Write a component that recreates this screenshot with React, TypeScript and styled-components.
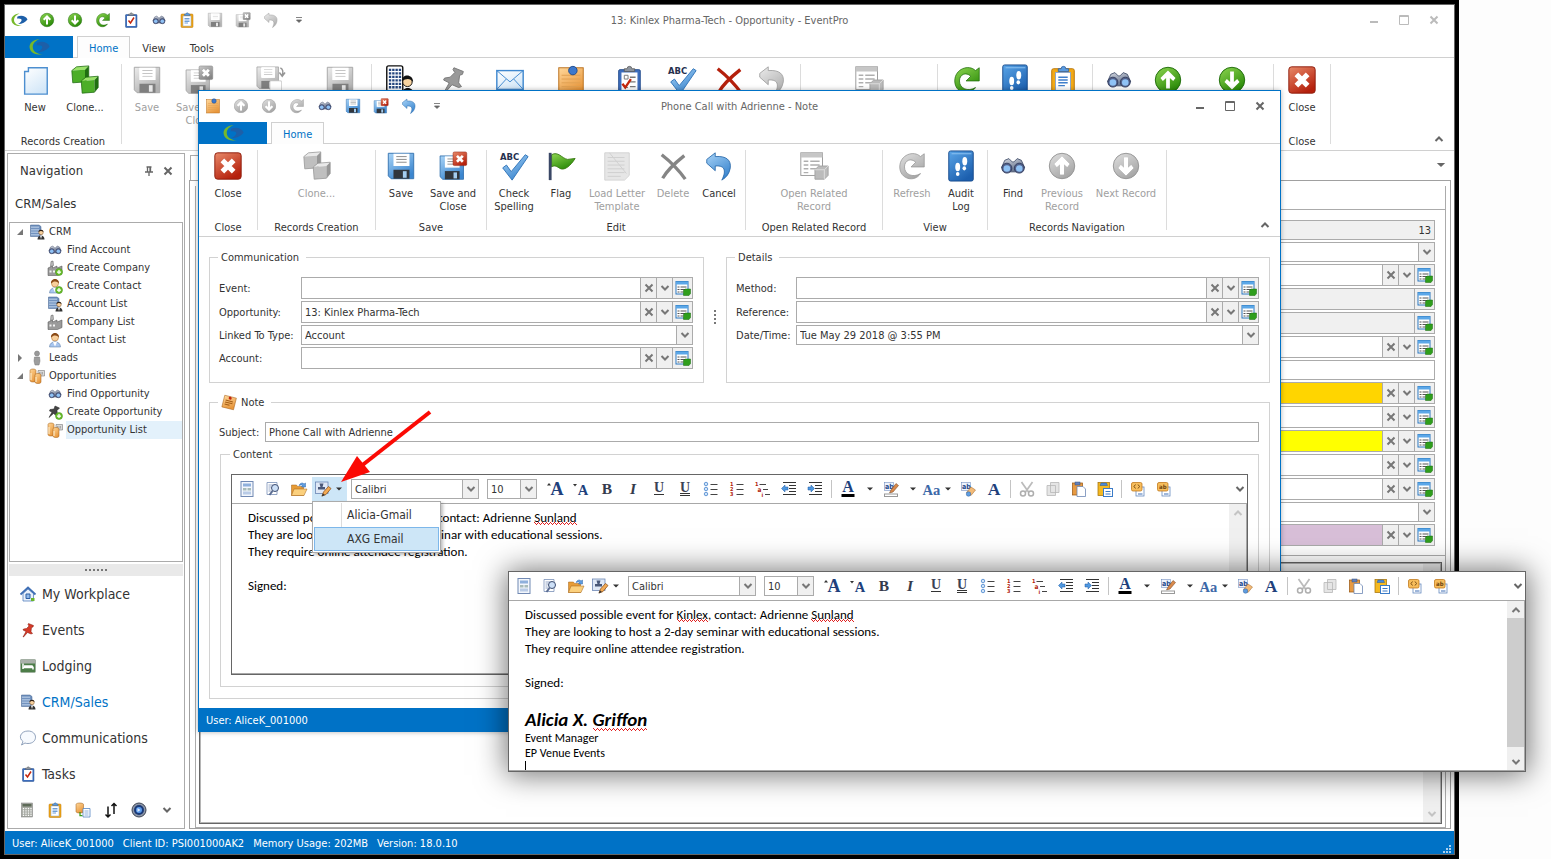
import React from "react";
import styled, { createGlobalStyle, css } from "styled-components";

const UI = `"DejaVu Sans Condensed", "Noto Sans", sans-serif`;
const DOC = `Carlito, Lato, "Open Sans", sans-serif`;
const BLUE = "#0072c6";

const Global = createGlobalStyle`
  * { box-sizing: border-box; }
  body { margin: 0; background: #fdfdfd; font: 11px/13px ${UI}; color: #333; }
  button, input, select { font: inherit; color: inherit; margin: 0; padding: 0; border: 0; background: none; border-radius: 0; }
  button { display: flex; align-items: center; justify-content: center; }
  fieldset { margin: 0; min-width: 0; }
`;

/* ---------- icons ---------- */

const Svg = styled.svg<{ $gray?: boolean }>`
  display: block;
  flex: none;
  overflow: visible;
  ${(p) => p.$gray && css`filter: grayscale(1) brightness(1.1); opacity: 0.65;`}
`;

const Gradients = () => (
  <svg width="0" height="0" style={{ position: "absolute" }} aria-hidden="true">
    <defs>
      {[
        ["gGreen", "#8ed651", "#2a8a08"],
        ["gBlue", "#a9d4f7", "#3b86cf"],
        ["gRed", "#e88a6a", "#b5200c"],
        ["gOrange", "#ffd79a", "#e8973c"],
        ["gPage", "#ffffff", "#d3e7f8"],
        ["gSilver", "#d8dce4", "#5d6a86"],
        ["gBook", "#5aa5e8", "#1c5fae"],
      ].map(([id, a, b]) => (
        <linearGradient key={id} id={id} x1="0" y1="0" x2="0.6" y2="1">
          <stop offset="0" stopColor={a} />
          <stop offset="1" stopColor={b} />
        </linearGradient>
      ))}
    </defs>
  </svg>
);

const cube = (x: number, y: number) => (
  <g key={x} transform={`translate(${x} ${y})`}>
    <path d="M0 5l5-4 13-1-4 4z" fill="#9be26a" />
    <path d="M0 5l14-1v13L1 18z" fill="#4cae28" />
    <path d="M14 4l4-4v12l-4 5z" fill="#1f6f10" />
    <path d="M0 5l5-4 13-1v12l-4 5-13 1z" fill="none" stroke="#1d6a10" strokeWidth="0.8" />
  </g>
);

const disk = (
  <>
    <path d="M2.500 2.500h27v27h-24l-3-3z" fill="url(#gBlue)" stroke="#3573b0" />
    <rect x="8" y="3" width="17" height="13" fill="#fff" />
    <path d="M11 6h11M11 9h11M11 12h11" stroke="#888" />
    <rect x="8" y="20" width="17" height="9.500" fill="#31363d" />
    <rect x="18" y="21.500" width="4" height="7" fill="#a4cdf0" />
  </>
);

const redBox = (
  <>
    <rect x="2" y="2" width="28" height="28" rx="3" fill="url(#gRed)" stroke="#8d1c0c" />
    <path d="M10 10l12 12M22 10L10 22" stroke="#fff" strokeWidth="5.500" />
  </>
);

const board = (
  <>
    <rect x="5" y="5" width="23" height="26" rx="1.500" fill="#3d6dbd" stroke="#27508f" />
    <rect x="8" y="8" width="17" height="20" fill="#fff" />
    <path d="M11 7V4h3a2.500 2.500 0 0 1 5 0h3v3z" fill="#8d949e" stroke="#555" strokeWidth="0.8" />
  </>
);

const goldBoard = (
  <>
    <rect x="4" y="4" width="24" height="27" rx="2" fill="#f2a917" stroke="#b87408" />
    <rect x="8" y="8" width="16" height="20" fill="#fff" stroke="#8aa5cc" />
    <path d="M11 13h10M11 16h10M11 19h10M11 22h7" stroke="#3f7fcb" strokeWidth="1.500" />
    <path d="M11 7V4h3a2.500 2.500 0 0 1 5 0h3v3z" fill="#5a9be0" stroke="#2b5c9d" strokeWidth="0.800" />
  </>
);

const building = (
  <>
    <path d="M3 2h17l4 3v20H3z" fill="#7192bf" stroke="#3f5f8d" />
    <path d="M6 5v19M10 5v19M14 5v19M18 5v19" stroke="#dbe8f8" strokeWidth="2" strokeDasharray="3 2" />
    <circle cx="24" cy="17" r="4.500" fill="#f6cf9d" stroke="#7b4c1d" />
    <path d="M19 16c0-6 10-6 10 0-3-2-6-3-10 0z" fill="#2a1c12" />
    <path d="M17 31c0-11 14-11 14 0z" fill="#333" />
    <path d="M22 23h4l-2 7z" fill="#fff" />
  </>
);

const person = (
  <>
    <path d="M5 30c0-14 22-14 22 0z" fill="#a9c6ee" stroke="#54749f" />
    <path d="M12 20h8l-4 9z" fill="#fff" />
    <circle cx="16" cy="11" r="7" fill="#f8cf9b" stroke="#a5641e" />
    <path d="M8 11C7-1 25-1 24 11c-3-5-11-6-16 0z" fill="#8a4a16" />
  </>
);

const plus = (
  <>
    <circle cx="24" cy="24" r="7" fill="#6cc02e" stroke="#3f8a12" />
    <path d="M24 20v8M20 24h8" stroke="#fff" strokeWidth="2.500" />
  </>
);

const factory = (
  <>
    <path d="M2 16l9-4v4l9-4v4l10-4v15l-9 4H2z" fill="#9b9b9b" stroke="#4b4b4b" />
    <path d="M7 13l1-10 4-1 1 9z" fill="#bdbdbd" stroke="#555" />
    <path d="M5 21h4v4H5zM12 21h4v4h-4z" fill="#f4f4f4" />
  </>
);

const coins = (
  <>
    <path d="M18 5h13v11H18z" fill="#d9d9d9" stroke="#666" />
    <path d="M21 8v5M24 8v5M27 8v5" stroke="#777" />
    <path d="M2 5c0-4 12-4 12 0v20c0 4-12 4-12 0z" fill="url(#gOrange)" stroke="#9c5a14" />
    <path d="M12 14c0-4 12-4 12 0v14c0 4-12 4-12 0z" fill="url(#gOrange)" stroke="#9c5a14" />
    <path d="M4 10v14M14 18v10" stroke="#fff3d6" strokeWidth="2" />
  </>
);

const ab = (
  <>
    <rect x="3" y="3" width="18" height="16" fill="#eef4fd" stroke="#5f7fb5" />
    <text x="4" y="16" fontSize="14" fontWeight="bold" fontFamily="DejaVu Sans Condensed" fill="#244a8c">ab</text>
  </>
);

const pageStack = (
  <>
    <rect x="12" y="12" width="16" height="18" fill="#fff" stroke="#5b82bb" strokeWidth="1.500" />
    <path d="M16 26h9" stroke="#3f6fb5" strokeWidth="2" />
    <rect x="3" y="3" width="21" height="17" rx="3" fill="#f7bd5b" stroke="#bd7416" strokeWidth="1.500" />
  </>
);

const serif = (t: string, size: number, x = 16, fill = "#20407c", extra: object = {}) => (
  <text x={x} y="26" fontSize={size} textAnchor="middle" fontFamily="Liberation Serif" fontWeight="bold" fill={fill} {...extra}>{t}</text>
);

const lines = "M15 7h14M15 17h14M15 27h14";

const art: Record<string, React.ReactNode> = {
  logo: (
    <>
      <path d="M17 3C6 4 0 10 1 17c1 8 10 12 21 11C13 27 6 23 6 16 6 10 10 6 17 3z" fill="#76b82a" />
      <path d="M13 9c8-3 17-1 20 6-4 5-10 9-19 9 5-3 8-6 7-9-1-2-4-2-9-2z" fill="#1d5fa8" />
    </>
  ),
  up: (
    <>
      <circle cx="16" cy="16" r="13.500" fill="url(#gGreen)" stroke="#1e6b0a" />
      <path d="M16 6l8 8-2.500 3-3.500-3v11h-4V14l-3.500 3L8 14z" fill="#fff" />
    </>
  ),
  down: (
    <>
      <circle cx="16" cy="16" r="13.500" fill="url(#gGreen)" stroke="#1e6b0a" />
      <path d="M16 26l8-8-2.500-3-3.500 3V7h-4v11l-3.500-3L8 18z" fill="#fff" />
    </>
  ),
  refresh: (
    <path d="M25 24C19 34 3 30 3 17 3 4 18-1 25 6l4-3v14H15l5-5c-5-5-12-2-12 5 0 8 9 12 17 7z" fill="url(#gGreen)" stroke="#1e6b0a" strokeWidth="0.800" />
  ),
  task: (
    <>
      {board}
      <path d="M11 17l4 5 7-11" fill="none" stroke="#c4260c" strokeWidth="3" />
    </>
  ),
  taskList: (
    <>
      {board}
      <path d="M11 11h4v4h-4zM11 24h4" fill="none" stroke="#777" />
      <path d="M17 13h6M17 18h6M17 23h6" stroke="#777" strokeWidth="1.500" />
      <path d="M9 20l3 4 6-9" fill="none" stroke="#c4260c" strokeWidth="2.500" />
    </>
  ),
  find: (
    <g transform="translate(2 2) scale(.88)">
      <path d="M6 9l5-2 4 4h2l4-4 5 2 4 9-9 5h-9l-10-5z" fill="url(#gSilver)" stroke="#3b4864" />
      <circle cx="8.500" cy="18.500" r="6" fill="#53618a" stroke="#2d3859" />
      <circle cx="23.500" cy="18.500" r="6" fill="#53618a" stroke="#2d3859" />
      <circle cx="8.500" cy="19" r="4" fill="#8fc2f5" />
      <circle cx="23.500" cy="19" r="4" fill="#8fc2f5" />
    </g>
  ),
  clip: goldBoard,
  save: disk,
  saveClose: (
    <>
      <g transform="translate(0 3) scale(.92)">{disk}</g>
      <g transform="translate(15 0) scale(.52)">{redBox}</g>
    </>
  ),
  saveNew: (
    <>
      <g transform="scale(.85)">{disk}</g>
      <path d="M27 3q4 2 2 8m-3-3l3 4 3-4" fill="none" stroke="#555" strokeWidth="1.500" />
      <path d="M16 17h12v14H16z" fill="#fff" stroke="#999" />
    </>
  ),
  undo: (
    <path d="M3 9l9-7v4c12-1 17 4 16 12-1 6-4 10-9 13 4-8 5-16-7-15v5L3 13z" fill="url(#gBlue)" stroke="#2767a8" strokeWidth="0.900" />
  ),
  page: <path d="M9 3h20v28H5V7h4z" fill="url(#gPage)" stroke="#4d8fd0" strokeWidth="1.500" />,
  cubes: <>{cube(2, 1)}{cube(12, 12)}</>,
  building,
  bigBuilding: (
    <>
      <rect x="3" y="1" width="17" height="27" rx="2" fill="#fff" stroke="#111" strokeWidth="1.500" />
      <path d="M6.500 4v21M10 4v21M13.500 4v21M17 4v21" stroke="#24457e" strokeWidth="2.500" strokeDasharray="2.500 1.200" />
      <circle cx="25" cy="18" r="5" fill="#f7d3a0" stroke="#111" />
      <path d="M19 17c0-8 12-8 12 1-3-4-7-4-12-1z" fill="#111" />
      <path d="M18 32c1-10 14-10 14 0z" fill="#111" />
    </>
  ),
  pin: <path d="M17 3l10 4-1 3-3 1-1 8 3 4-3 1-7-3-8 9-1 0 6-11-6-3 1-2 6-1 5-5-2-3z" fill="#d63a28" stroke="#7e1509" />,
  mail: (
    <>
      <rect x="2" y="6" width="28" height="20" fill="url(#gPage)" stroke="#3e87cf" strokeWidth="1.500" />
      <path d="M2 6l14 12L30 6M2 26l10-11M30 26L20 15" fill="none" stroke="#3e87cf" />
    </>
  ),
  note: (
    <>
      <rect x="3" y="3" width="26" height="27" fill="url(#gOrange)" stroke="#b96f1c" />
      <path d="M6 11h20M6 15h20M6 19h20M6 23h20" stroke="#e0a052" />
      <circle cx="18" cy="6" r="4.500" fill="#3c78cc" stroke="#1e4a8c" />
    </>
  ),
  noteTilt: (
    <g transform="rotate(14 16 16)">
      <rect x="4" y="3" width="24" height="24" fill="url(#gOrange)" stroke="#a45e16" />
      <path d="M8 12h15M8 16h15M8 20h10" stroke="#a45e16" strokeWidth="2" />
      <circle cx="16" cy="6" r="3" fill="#c4260c" />
    </g>
  ),
  abc: (
    <>
      <text x="1" y="10" fontSize="10" fontWeight="bold" fontFamily="DejaVu Sans Condensed" fill="#26304e">ABC</text>
      <path d="M4 18l4-3 5 7L28 4l3 2-17 25z" fill="url(#gBlue)" stroke="#2f73b8" />
    </>
  ),
  cross: (
    <path d="M4 4c9 7 18 16 25 26M28 5C18 13 9 22 5 29" fill="none" stroke="#b5200c" strokeWidth="3.500" />
  ),
  related: (
    <>
      <rect x="2" y="2" width="23" height="24" fill="#eee" stroke="#555" />
      <rect x="2" y="2" width="23" height="5" fill="#999" />
      <path d="M5 11h5M12 11h10M5 15h5M12 15h10M5 19h5M12 19h6M5 23h5" stroke="#777" strokeWidth="1.500" />
      <path d="M17 20l4-4h10v10l-4 4H17z" fill="#8a8a8a" stroke="#666" />
      <path d="M17 20h10v10M27 20l4-4" fill="none" stroke="#bbb" />
    </>
  ),
  audit: (
    <>
      <rect x="3" y="0" width="26" height="32" rx="2" fill="url(#gBook)" stroke="#154a8c" />
      <path d="M6 3h21" stroke="#8ec3f2" />
      <ellipse cx="12.500" cy="17" rx="2.600" ry="4.500" fill="#fff" />
      <ellipse cx="12.500" cy="24.500" rx="1.900" ry="2.200" fill="#fff" />
      <ellipse cx="20" cy="11" rx="2.600" ry="4.500" fill="#fff" />
      <ellipse cx="19.500" cy="18.500" rx="1.900" ry="2.200" fill="#fff" />
    </>
  ),
  close: redBox,
  flag: (
    <>
      <path d="M6 4c7-4 11 4 17 5l8-1c-5 8-12 14-17 10-3-2-5-3-8-1z" fill="url(#gGreen)" stroke="#3c7d14" />
      <path d="M4.500 2v29" stroke="#3a4766" strokeWidth="3" />
    </>
  ),
  letter: (
    <>
      <path d="M3 2h26v24l-5 5H3z" fill="#c6c6c6" stroke="#aaa" />
      <path d="M6 7h18M6 11h18M6 15h18M6 19h18M6 23h18M6 27h14M8 2l18 22" stroke="#a5a5a5" />
    </>
  ),
  record: (
    <>
      <rect x="2" y="3" width="24" height="25" fill="#fff" stroke="#2a76bd" strokeWidth="2" />
      <rect x="2" y="3" width="24" height="6" fill="#5ba7e8" />
      <path d="M5 14h4M11 14h12M5 19h4M11 19h12M5 24h4M11 24h6" stroke="#555" strokeWidth="2" />
      <path d="M17 21l3-3h11v9l-3 4H17z" fill="#2f9e1c" stroke="#176b0c" />
    </>
  ),
  person,
  personAdd: <>{person}{plus}</>,
  factory,
  factoryAdd: <>{factory}{plus}</>,
  coins,
  pinAdd: (
    <>
      <path d="M16 4l9 4-5 5 1 8-4 1-4-3-9 8 6-11-5-2 1-3 8-1z" fill="#444" stroke="#222" />
      {plus}
    </>
  ),
  lead: (
    <>
      <circle cx="16" cy="7" r="5" fill="#999" stroke="#777" />
      <path d="M11 14h10l1 8-2 8h-8l-2-8z" fill="#9d9d9d" stroke="#777" />
    </>
  ),
  home: (
    <>
      <path d="M6 15v15h21V15L16 6z" fill="#e8f0fb" stroke="#4c79b9" strokeWidth="1.500" />
      <path d="M1 17L16 3l15 14" fill="none" stroke="#3f6fb5" strokeWidth="3.500" />
      <path d="M12 16h8v9h-8z" fill="#8fb8ea" stroke="#2d5ea3" strokeWidth="2" />
      <path d="M22 24h7v6h-7z" fill="#69b52e" />
    </>
  ),
  bed: (
    <>
      <rect x="1" y="3" width="30" height="26" rx="2" fill="#4c7d48" stroke="#98a598" />
      <rect x="1" y="3" width="30" height="8" fill="#aab0aa" />
      <path d="M6 22V11M6 19h20v4M8 16h16l2 3" stroke="#fff" strokeWidth="3" fill="none" />
    </>
  ),
  bubble: (
    <path d="M16 2c20 0 20 25 0 25-2 0-4 0-6-1l-7 4 3-7C-4 16 1 2 16 2z" fill="#f7fafe" stroke="#6d84a6" strokeWidth="1.500" />
  ),
  calc: (
    <>
      <rect x="5" y="2" width="22" height="28" fill="#a7aaa3" stroke="#777" />
      <rect x="7" y="4" width="18" height="5" fill="#5e6a58" />
      <path d="M9 12v16M14 12v16M19 12v16M24 12v16" stroke="#fff" strokeWidth="2.500" strokeDasharray="2.500 2" />
    </>
  ),
  db: (
    <>
      <path d="M2 5c0-4 15-4 15 0v14c0 4-15 4-15 0z" fill="url(#gOrange)" stroke="#9c5a14" />
      <path d="M10 20v7h5" fill="none" stroke="#3b9b1b" strokeWidth="2.500" />
      <path d="M16 13h14v17H16z" fill="#fff" stroke="#4b7fc0" strokeWidth="1.500" />
      <path d="M19 18h8M19 22h8M19 26h8" stroke="#6b98d3" strokeWidth="1.500" />
    </>
  ),
  swap: (
    <path d="M10 9v21M5 25l5 5 5-5M22 24V3M17 8l5-5 5 5" fill="none" stroke="#111" strokeWidth="3" />
  ),
  orb: (
    <>
      <circle cx="16" cy="16" r="14" fill="#8c95a5" stroke="#3e4554" strokeWidth="2" />
      <circle cx="16" cy="16" r="10" fill="#1a3a78" />
      <circle cx="16" cy="16" r="6" fill="#5b9bec" />
      <path d="M13 12l6 4-6 4z" fill="#dcebff" />
    </>
  ),
  layout: (
    <>
      <rect x="4" y="1" width="24" height="30" fill="#f3f7fd" stroke="#7189b3" strokeWidth="2" />
      <rect x="8" y="5" width="16" height="6" fill="#8fb0dc" />
      <path d="M8 14h7v5H8zM17 14h7v5h-7z" fill="#a8bbb9" />
      <rect x="8" y="21" width="16" height="6" fill="#b9cbe6" />
    </>
  ),
  preview: (
    <>
      <path d="M4 3h20v24H4z" fill="#fff" stroke="#7189b3" strokeWidth="1.500" />
      <path d="M7 8h12M7 12h6M7 16h4M7 20h6" stroke="#7189b3" strokeWidth="1.500" />
      <circle cx="20" cy="14" r="7" fill="#cde0f7" stroke="#3d4d70" strokeWidth="2" />
      <path d="M15 20l-6 8" stroke="#5a6c92" strokeWidth="4" />
    </>
  ),
  folder: (
    <>
      <path d="M1 8h10l2 3h12v18H1z" fill="#e79c36" stroke="#a3631a" />
      <path d="M6 16h26l-6 13H1z" fill="#fbd07d" stroke="#a3631a" />
      <path d="M16 9c3-6 8-6 10-3l3-2v8h-8l2-3c-2-2-4-1-7 0z" fill="#5f9de0" stroke="#2f66aa" />
    </>
  ),
  stamp: (
    <>
      <rect x="1" y="2" width="25" height="23" fill="#dfe8f6" stroke="#6480b0" strokeWidth="1.500" />
      <path d="M9 5h8l-2 7h5v5H6v-5h5z" fill="#4a5878" />
      <path d="M14 30l3-8 10-11 5 4-10 12z" fill="#f3ab55" stroke="#8d4f14" strokeWidth="1.500" />
      <path d="M13 31l3-6 4 3z" fill="#333" />
    </>
  ),
  grow: <>{serif("A", 36, 20, "#20407c", { y: 28 })}<path d="M0 9l4-5 4 5z" fill="#333" /></>,
  shrink: <>{serif("A", 29, 20, "#20407c", { y: 28 })}<path d="M0 6h8l-4 5z" fill="#333" /></>,
  bold: serif("B", 31, 16, "#343b4c"),
  italic: serif("I", 31, 16, "#343b4c", { fontStyle: "italic" }),
  underline: <>{serif("U", 28, 16, "#3b4254", { y: 22 })}<path d="M6 27h20" stroke="#333" strokeWidth="2" /></>,
  dunderline: <>{serif("U", 28, 16, "#3b4254", { y: 21 })}<path d="M6 25h20M6 29h20" stroke="#333" strokeWidth="2" /></>,
  bullets: (
    <>
      {[6, 16, 26].map((y) => <circle key={y} cx="6" cy={y} r="3.500" fill="#cfe3f8" stroke="#3f7fcb" strokeWidth="1.500" />)}
      <path d={lines} stroke="#444" strokeWidth="2" />
    </>
  ),
  numbers: (
    <>
      {["1", "2", "3"].map((t, i) => <text key={t} x="2" y={10 + i * 10} fontSize="11" fontWeight="bold" fontFamily="DejaVu Sans Condensed" fill="#b01c0c">{t}</text>)}
      <path d={lines} stroke="#444" strokeWidth="2" />
    </>
  ),
  outline: (
    <>
      <text x="0" y="10" fontSize="11" fontWeight="bold" fontFamily="DejaVu Sans Condensed" fill="#b01c0c">1</text>
      <text x="5" y="21" fontSize="13" fontWeight="bold" fontFamily="DejaVu Sans Condensed" fill="#b01c0c">a</text>
      <text x="13" y="31" fontSize="11" fontWeight="bold" fontFamily="DejaVu Sans Condensed" fill="#b01c0c">i</text>
      <path d="M9 7h13M16 17h10M20 27h10" stroke="#444" strokeWidth="2" />
    </>
  ),
  outdent: (
    <>
      <path d="M4 3h26M16 9h14M16 15h14M16 21h14M4 27h26" stroke="#333" strokeWidth="2" />
      <path d="M1 15l7-7v4h6v6H8v4z" fill="#4f98e0" stroke="#1d5ba5" />
    </>
  ),
  indent: (
    <>
      <path d="M4 3h26M16 9h14M16 15h14M16 21h14M4 27h26" stroke="#333" strokeWidth="2" />
      <path d="M15 15L8 8v4H2v6h6v4z" fill="#4f98e0" stroke="#1d5ba5" />
    </>
  ),
  color: <>{serif("A", 32, 16, "#20407c", { y: 22 })}<rect x="3" y="26" width="26" height="6" fill="#000" /></>,
  highlight: (
    <>
      {ab}
      <path d="M13 24l3-6L26 5l5 4-11 13z" fill="#d98a4c" stroke="#6d3a16" />
      <rect x="3" y="26" width="26" height="5" fill="#fff" stroke="#999" strokeWidth="2" />
    </>
  ),
  changeCase: <text x="-3" y="27" fontSize="29" fontFamily="Liberation Serif" fontWeight="bold" fill="#3c68a8">Aa</text>,
  erase: (
    <>
      {ab}
      <path d="M13 23l9-11 9 6-9 11z" fill="#f3bb78" stroke="#9a5f20" />
      <circle cx="17" cy="26" r="4.500" fill="#5f9de0" stroke="#2a5f9f" />
    </>
  ),
  font: serif("A", 35, 16, "#20407c", { y: 28 }),
  cut: (
    <>
      <path d="M5 2l14 20M27 2L13 22" stroke="#8a8a8a" strokeWidth="3.500" />
      <circle cx="8" cy="25" r="5" fill="none" stroke="#777" strokeWidth="3" />
      <circle cx="24" cy="25" r="5" fill="none" stroke="#777" strokeWidth="3" />
    </>
  ),
  copy: (
    <path d="M11 3h17v20H11zM4 9h17v20H4z" fill="#c4c4c4" stroke="#808080" strokeWidth="1.500" />
  ),
  paste: (
    <>
      <rect x="3" y="4" width="20" height="24" fill="#e79a42" stroke="#9c5a14" strokeWidth="1.500" />
      <rect x="8" y="2" width="10" height="6" fill="#6480b8" stroke="#33507f" />
      <path d="M12 11h12l5 5v15H12z" fill="#fff" stroke="#6480b0" strokeWidth="1.500" />
    </>
  ),
  pasteSpecial: (
    <>
      <rect x="2" y="3" width="23" height="26" fill="#f5b921" stroke="#a5720a" strokeWidth="1.500" />
      <path d="M6 9h15l-2-5H8z" fill="#4c8bd8" stroke="#295a99" />
      <rect x="13" y="15" width="18" height="16" fill="#fff" stroke="#3a7bc8" strokeWidth="2" />
      <path d="M17 21h10M17 26h10" stroke="#3a7bc8" strokeWidth="2" />
    </>
  ),
  fieldCode: <>{pageStack}<path d="M11 7l-3 4 3 4M16 7l3 4-3 4" fill="none" stroke="#6b420e" strokeWidth="1.800" /></>,
  fieldText: <>{pageStack}<text x="6" y="16" fontSize="12" fontWeight="bold" fontFamily="DejaVu Sans Condensed" fill="#6b420e">ab</text></>,
};

const Icon = ({ name, size = 16, gray }: { name: string; size?: number; gray?: boolean }) => (
  <Svg width={size} height={size} viewBox={size > 30 ? "-1 -1 34 34" : "0 0 32 32"} $gray={gray} aria-hidden="true">{art[name]}</Svg>
);

const glyphs: Record<string, React.ReactNode> = {
  chevron: <path d="M1.500 3l3.500 3.500L8.500 3" fill="none" stroke="currentColor" strokeWidth="2" />,
  chevronUp: <path d="M1.500 7L5 3.500 8.500 7" fill="none" stroke="currentColor" strokeWidth="2" />,
  x: <path d="M1.500 1.500l7 7M8.500 1.500l-7 7" stroke="currentColor" strokeWidth="2" />,
  min: <path d="M1 7h8" stroke="currentColor" strokeWidth="2" />,
  max: <path d="M.5.5h9v9h-9zM.5 1.500h9" fill="none" stroke="currentColor" />,
  caret: <path d="M2 3.500h6L5 6.500z" fill="currentColor" />,
  more: <path d="M2 2.500h6M2.500 5h5L5 7.500z" fill="currentColor" stroke="currentColor" strokeWidth="0.800" />,
  thumb: <path d="M2.500 1h5M3.500 1v5M6.500 1v5M6 1v5M1 6h8M5 6v4" fill="none" stroke="currentColor" strokeWidth="1.300" />,
  open: <path d="M8 2v6H2z" fill="currentColor" />,
  shut: <path d="M3 1l4 4-4 4z" fill="currentColor" />,
};

const Glyph = ({ name, size = 10 }: { name: string; size?: number }) => (
  <Svg width={size} height={size} viewBox="0 0 10 10" aria-hidden="true">{glyphs[name]}</Svg>
);

/* ---------- window chrome ---------- */

const TitleBar = styled.header`
  display: grid;
  grid-template-columns: 1fr auto 1fr;
  align-items: center;
  height: 31px;
  padding-bottom: 1px;
`;
const QuickAccess = styled.div`
  display: flex;
  align-items: center;
`;
const QuickButton = styled.button`
  width: 28px;
  height: 28px;
  color: #666;
`;
const WindowTitle = styled.h1`
  margin: 0;
  font-size: 11px;
  font-weight: normal;
  color: #666;
  white-space: nowrap;
`;
const WindowControls = styled.div<{ $dim?: boolean }>`
  display: flex;
  justify-content: flex-end;
  padding-right: 5px;
  color: ${(p) => (p.$dim ? "#bbb" : "#666")};
`;
const ControlButton = styled.button`
  width: 30px;
  height: 28px;
`;
const TabRow = styled.nav`
  display: flex;
  height: 22px;
  border-bottom: 1px solid #d0d0d0;
`;
const AppButton = styled.button`
  width: 68px;
  height: 22px;
  margin-right: 4px;
  background: ${BLUE};
`;
const Tab = styled.button<{ $active?: boolean }>`
  height: 22px;
  padding: 1px 11px 0;
  border: 1px solid transparent;
  border-bottom: 0;
  ${(p) => p.$active && css`
    color: ${BLUE};
    background: #fdfdfd;
    border-color: #d0d0d0;
  `}
`;
const RibbonBar = styled.div`
  display: flex;
  height: 93px;
  padding-top: 6px;
  border-bottom: 1px solid #d0d0d0;
`;
const Group = styled.section<{ $w?: number }>`
  flex: none;
  height: 80px;
  min-width: ${(p) => (p.$w ? `${p.$w}px` : "0")};
  padding: 0 3px;
  border-right: 1px solid #dcdcdc;
`;
const GroupButtons = styled.div`
  display: flex;
  height: 70px;
`;
const GroupLabel = styled.div`
  line-height: 15px;
  text-align: center;
  white-space: nowrap;
`;
const BigButton = styled.button<{ $w: number }>`
  flex: none;
  flex-direction: column;
  justify-content: flex-start;
  gap: 5px;
  width: ${(p) => p.$w}px;
  white-space: pre;
  &:disabled { color: #a0a0a0; }
`;
const Collapse = styled.button`
  align-self: flex-end;
  margin: 0 10px 6px auto;
  color: #666;
`;

type Cmd = [icon: string, width: number, label: string, off?: boolean, hidden?: boolean];
type RibbonGroup = { label?: string; w?: number; items: Cmd[] };

const Ribbon = ({ groups }: { groups: RibbonGroup[] }) => (
  <RibbonBar>
    {groups.map((g, i) => (
      <Group key={i} $w={g.w}>
        <GroupButtons>
          {g.items.map(([icon, w, label, off, hidden], j) => (
            <BigButton key={j} $w={w} disabled={off} aria-label={label.replace("\n", " ")}>
              <Icon name={icon} size={32} gray={off} />
              {!hidden && label}
            </BigButton>
          ))}
        </GroupButtons>
        <GroupLabel>{g.label}</GroupLabel>
      </Group>
    ))}
    <Collapse aria-label="Collapse ribbon"><Glyph name="chevronUp" /></Collapse>
  </RibbonBar>
);

const Chrome = ({ title, quick, tabs, dim }: { title: string; quick: [string, boolean?][]; tabs: string[]; dim?: boolean }) => (
  <>
    <TitleBar>
      <QuickAccess>
        {quick.map(([n, g], i) => <QuickButton key={i} aria-label={n}><Icon name={n} gray={g} /></QuickButton>)}
        <QuickButton aria-label="Customize"><Glyph name="more" /></QuickButton>
      </QuickAccess>
      <WindowTitle>{title}</WindowTitle>
      <WindowControls $dim={dim}>
        <ControlButton aria-label="Minimize"><Glyph name="min" /></ControlButton>
        <ControlButton aria-label="Maximize"><Glyph name="max" /></ControlButton>
        <ControlButton aria-label="Close window"><Glyph name="x" /></ControlButton>
      </WindowControls>
    </TitleBar>
    <TabRow>
      <AppButton aria-label="Application menu"><Icon name="logo" size={20} /></AppButton>
      {tabs.map((t, i) => <Tab key={t} $active={i === 0}>{t}</Tab>)}
    </TabRow>
  </>
);

/* ---------- form controls ---------- */

const FieldBox = styled.div<{ $h?: number; $bg?: string }>`
  display: flex;
  flex: 1;
  min-width: 0;
  height: ${(p) => p.$h ?? 22}px;
  background: ${(p) => p.$bg ?? "#fff"};
  border: 1px solid #ababab;
`;
const FieldInput = styled.input<{ $right?: boolean }>`
  flex: 1;
  min-width: 0;
  padding: 0 3px;
  text-align: ${(p) => (p.$right ? "right" : "left")};
`;
const FieldButton = styled.button<{ $w?: number }>`
  flex: none;
  width: ${(p) => p.$w ?? 16}px;
  color: #777;
  background: #f0f0f0;
  border-left: 1px solid #ababab;
`;
const SelectBox = styled.div<{ $w?: number; $h?: number }>`
  display: grid;
  grid-template-columns: 1fr 16px;
  flex: ${(p) => (p.$w ? "none" : "1")};
  width: ${(p) => (p.$w ? `${p.$w}px` : "auto")};
  height: 20px;
  background: #fff;
  border: 1px solid #ababab;
`;
const NativeSelect = styled.select`
  grid-area: 1 / 1 / 2 / 3;
  appearance: none;
  min-width: 0;
  padding: 0 3px;
`;
const SelectArrow = styled.span`
  grid-area: 1 / 2;
  display: flex;
  align-items: center;
  justify-content: center;
  color: #777;
  background: #f0f0f0;
  border-left: 1px solid #ababab;
  pointer-events: none;
`;

const Select = ({ id, label, value, w }: { id?: string; label?: string; value: string; w?: number }) => (
  <SelectBox $w={w}>
    <NativeSelect id={id} aria-label={label} defaultValue={value}><option>{value}</option></NativeSelect>
    <SelectArrow><Glyph name="chevron" /></SelectArrow>
  </SelectBox>
);

const Lookup = ({ id, label, value = "", bg, edit = true }: { id?: string; label?: string; value?: string; bg?: string; edit?: boolean }) => (
  <FieldBox $bg={bg}>
    <FieldInput id={id} aria-label={label} defaultValue={value} readOnly={!edit} />
    {edit && <FieldButton aria-label="Clear"><Glyph name="x" /></FieldButton>}
    {edit && <FieldButton aria-label="Open list"><Glyph name="chevron" /></FieldButton>}
    <FieldButton $w={20} aria-label="Open record"><Icon name="record" /></FieldButton>
  </FieldBox>
);

const GroupBox = styled.fieldset<{ $grow?: number }>`
  ${(p) => p.$grow && css`flex: ${p.$grow} 1 0;`}
  padding: 0 10px 11px 9px;
  border: 1px solid #d2d2d2;
`;
const ContentBox = styled(GroupBox)`
  margin-left: 1px;
  padding-left: 10px;
`;
const Legend = styled.legend`
  display: flex;
  align-items: center;
  gap: 4px;
  height: 13px;
  margin-left: -1px;
  padding: 0 7px 0 3px;
`;
const Row = styled.div<{ $label: number }>`
  display: grid;
  grid-template-columns: ${(p) => p.$label}px 1fr;
  align-items: center;
`;
const Rows = styled.div`
  display: flex;
  flex-direction: column;
  gap: 2px;
  padding: 13px 0 2px;
`;

/* ---------- rich text editor ---------- */

const EditorFrame = styled.section`
  display: flex;
  flex-direction: column;
  background: #fff;
  border: 1px solid #666;
`;
const NoteEditor = styled(EditorFrame)`
  margin-top: 13px;
`;
const Toolbar = styled.div`
  display: flex;
  align-items: center;
  height: 29px;
  padding-left: 2px;
  border-bottom: 1px solid #a8a8a8;
`;
const Tool = styled.button<{ $w?: number; $on?: boolean }>`
  flex: none;
  gap: 3px;
  width: ${(p) => p.$w ?? 26}px;
  height: 24px;
  color: #333;
  background: ${(p) => (p.$on ? "#cde6f7" : "transparent")};
`;
const Divider = styled.span`
  width: 1px;
  height: 18px;
  margin: 0 3px;
  background: #c4c4c4;
`;
const Space = styled.span<{ $w: number }>`
  flex: none;
  width: ${(p) => p.$w}px;
`;
const ToolbarEnd = styled(Tool)`
  margin-left: auto;
  width: 14px;
  color: #666;
`;
const EditorBody = styled.div<{ $h: number }>`
  display: flex;
  height: ${(p) => p.$h}px;
  border-right: 1px solid #a8a8a8;
  border-bottom: 1px solid #a8a8a8;
`;
const Doc = styled.div`
  flex: 1;
  min-width: 0;
  padding: 5px 0 0 16px;
  overflow: hidden;
  outline: none;
  color: #000;
  font: 13px/17px ${DOC};
  white-space: nowrap;
`;
const Line = styled.p`
  margin: 0;
  min-height: 17px;
`;
/* three one-pixel rows make the spelling zigzag */
const Misspelt = styled.span`
  background:
    linear-gradient(90deg, #e02020 1px, transparent 1px) 0 calc(100% - 2px) / 4px 1px repeat-x,
    linear-gradient(90deg, #e02020 1px, transparent 1px) 1px calc(100% - 1px) / 2px 1px repeat-x,
    linear-gradient(90deg, #e02020 1px, transparent 1px) 2px 100% / 4px 1px repeat-x;
`;
const Signature = styled.p`
  margin: 0;
  font: italic bold 19px/23px ${DOC};
`;
const SignatureLine = styled.p`
  margin: 0;
  font-size: 12px;
  line-height: 15px;
`;
const Caret = styled.span`
  display: block;
  width: 1px;
  height: 11px;
  background: #000;
`;
const ScrollBar = styled.div`
  display: flex;
  flex: none;
  flex-direction: column;
  justify-content: space-between;
  width: 17px;
  background: #f0f0f0;
`;
const ScrollButton = styled.button<{ $dim?: boolean }>`
  width: 17px;
  height: 17px;
  color: ${(p) => (p.$dim ? "#c4c4c4" : "#777")};
`;
const Thumb = styled.div`
  height: 129px;
  background: #cdcdcd;
`;
const ThumbArea = styled.div`
  flex: 1;
`;

const tools = (names: string[], off?: boolean) =>
  names.map((n) => <Tool key={n} aria-label={n} disabled={off}><Icon name={n} gray={off} /></Tool>);

const EditorToolbar = ({ menuOpen }: { menuOpen?: boolean }) => (
  <Toolbar role="toolbar">
    {tools(["layout", "preview", "folder"])}
    <Tool $w={35} $on={menuOpen} aria-label="Insert signature"><Icon name="stamp" /><Glyph name="caret" /></Tool>
    <Space $w={4} />
    <Select label="Font" value="Calibri" w={128} />
    <Space $w={8} />
    <Select label="Font size" value="10" w={50} />
    <Space $w={5} />
    {tools(["grow", "shrink", "bold", "italic", "underline", "dunderline", "bullets", "numbers", "outline", "outdent", "indent"])}
    <Divider />
    {tools(["color"])}
    <Tool $w={17} aria-label="Font colors"><Glyph name="caret" /></Tool>
    {tools(["highlight"])}
    <Tool $w={17} aria-label="Highlight colors"><Glyph name="caret" /></Tool>
    <Tool $w={34} aria-label="Change case"><Icon name="changeCase" /><Glyph name="caret" /></Tool>
    {tools(["erase", "font"])}
    <Divider />
    {tools(["cut", "copy"], true)}
    {tools(["paste", "pasteSpecial"])}
    <Divider />
    {tools(["fieldCode", "fieldText"])}
    <ToolbarEnd aria-label="More tools"><Glyph name="chevron" /></ToolbarEnd>
  </Toolbar>
);

const NoteText = () => (
  <>
    <Line>Discussed possible event for <Misspelt>Kinlex</Misspelt>, contact: Adrienne <Misspelt>Sunland</Misspelt></Line>
    <Line>They are looking to host a 2-day seminar with educational sessions.</Line>
    <Line>They require online attendee registration.</Line>
    <Line />
    <Line>Signed:</Line>
  </>
);

/* ---------- main window ---------- */

const Desktop = styled.div`
  position: relative;
  display: flex;
  min-height: 100vh;
  padding-right: 92px;
  overflow: hidden;
`;
const MainWindow = styled.main`
  display: flex;
  flex: 1;
  flex-direction: column;
  min-width: 0;
  background: #fff;
  border: 4px solid #000;
  box-shadow: inset 0 0 0 1px #666;
  padding: 1px;
`;
const Workspace = styled.div`
  display: flex;
  flex: 1;
  gap: 4px;
  padding: 2px 3px 2px 2px;
`;
const NavPanel = styled.aside`
  display: flex;
  flex: none;
  flex-direction: column;
  width: 178px;
  padding: 0 1px;
  border: 1px solid #ababab;
`;
const NavHeader = styled.div`
  display: flex;
  align-items: center;
  gap: 9px;
  height: 34px;
  padding: 0 10px 0 11px;
  color: #666;
`;
const NavTitle = styled.h2`
  flex: 1;
  margin: 0;
  font-size: 13px;
  font-weight: normal;
  line-height: 18px;
  color: #333;
`;
const NavSection = styled.h3`
  margin: 0;
  padding: 7px 6px 9px;
  font-size: 13px;
  font-weight: normal;
  line-height: 18px;
`;
const Tree = styled.ul`
  flex: 1;
  margin: 0;
  padding: 0;
  list-style: none;
  border: 1px solid #ababab;
`;
const TreeRow = styled.li<{ $child?: boolean }>`
  display: flex;
  align-items: center;
  gap: 4px;
  height: 18px;
  padding-left: ${(p) => (p.$child ? 37 : 5)}px;
  color: #777;
`;
const TreeLink = styled.a<{ $on?: boolean }>`
  flex: 1;
  height: 18px;
  margin-left: -1px;
  padding-left: 1px;
  line-height: 18px;
  color: #333;
  text-decoration: none;
  background: ${(p) => (p.$on ? "#e3f1fb" : "transparent")};
`;
const Splitter = styled.div`
  display: flex;
  align-items: center;
  justify-content: center;
  gap: 2px;
  height: 12px;
  margin-top: 2px;
  background: #e9e9e9;
`;
const Dot = styled.i`
  width: 2px;
  height: 2px;
  background: #777;
`;
const NavLink = styled.a<{ $on?: boolean }>`
  display: flex;
  align-items: center;
  gap: 6px;
  height: 36px;
  padding-left: 11px;
  font-size: 14px;
  line-height: 18px;
  text-decoration: none;
  color: ${(p) => (p.$on ? BLUE : "#333")};
`;
const NavFooter = styled.div`
  display: flex;
  align-items: center;
  height: 36px;
  padding-left: 4px;
  color: #666;
`;
const Document = styled.section`
  display: flex;
  flex: 1;
  flex-direction: column;
  min-width: 0;
`;
const DocumentTabs = styled.div`
  display: flex;
  align-items: stretch;
  justify-content: space-between;
  height: 27px;
  padding: 2px 3px 0 1px;
  color: #666;
`;
const DocumentTab = styled.div`
  width: 120px;
  border: 1px solid #ababab;
  border-bottom: 0;
`;
const TabList = styled.button`
  width: 14px;
  height: 20px;
`;
const DocumentFrame = styled.div`
  display: flex;
  flex: 1;
  padding: 5px 4px 0 5px;
  border: 1px solid #a0a0a0;
`;
const DocumentPage = styled.div`
  display: flex;
  flex: 1;
  flex-direction: column;
  gap: 6px;
  padding: 23px 0 3px 3px;
  border: 1px solid #ababab;
  border-top: 0;
`;
const RecordBox = styled.div`
  display: flex;
  flex-direction: column;
  gap: 2px;
  padding: 10px 10px 9px;
  border: 1px solid #ababab;
  border-right: 0;

  > * { flex: none; }
`;
const RecordNotes = styled.div`
  display: flex;
  flex: 1;
  justify-content: flex-end;
  margin-right: 3px;
  border: 1px solid #666;
  box-shadow: inset 0 0 0 1px #b5b5b5;
  padding: 1px;
`;
const StatusBar = styled.footer`
  display: flex;
  align-items: center;
  gap: 9px;
  height: 23px;
  padding: 1px 2px 0 7px;
  color: #fff;
  background: ${BLUE};
`;
const Grip = styled.svg`
  align-self: flex-end;
  margin-left: auto;
`;

const tree: [string, string, string, ("open" | "shut")?][] = [
  ["building", "CRM", "", "open"],
  ["find", "Find Account", "c"],
  ["factoryAdd", "Create Company", "c"],
  ["personAdd", "Create Contact", "c"],
  ["building", "Account List", "c"],
  ["factory", "Company List", "c"],
  ["person", "Contact List", "c"],
  ["lead", "Leads", "", "shut"],
  ["coins", "Opportunities", "", "open"],
  ["find", "Find Opportunity", "c"],
  ["pinAdd", "Create Opportunity", "c"],
  ["coins", "Opportunity List", "c"],
];

const modules: [string, string][] = [
  ["home", "My Workplace"],
  ["pin", "Events"],
  ["bed", "Lodging"],
  ["building", "CRM/Sales"],
  ["bubble", "Communications"],
  ["task", "Tasks"],
];

const mainRibbon: RibbonGroup[] = [
  { label: "Records Creation", w: 117, items: [["page", 54, "New"], ["cubes", 46, "Clone..."]] },
  { items: [["save", 44, "Save", true], ["saveClose", 60, "Save and\nClose", true], ["saveNew", 82, "Save and New", true, true], ["save", 57, "Save As", true, true]] },
  {
    items: [
      ["bigBuilding", 48, "Account", false, true], ["pin", 60, "Event", true, true], ["mail", 54, "Email", false, true],
      ["note", 68, "Note", false, true], ["taskList", 48, "Task", false, true], ["abc", 58, "Check Spelling", false, true],
      ["cross", 36, "Delete", false, true], ["undo", 50, "Cancel", true, true],
    ],
  },
  { items: [["related", 130, "Open Related Record", true, true]] },
  { items: [["refresh", 52, "Refresh", false, true], ["audit", 44, "Audit Log", false, true], ["clip", 52, "Reports", false, true]] },
  { items: [["find", 46, "Find", false, true], ["up", 52, "Previous Record", false, true], ["down", 76, "Next Record", false, true]] },
  { label: "Close", items: [["close", 50, "Close"]] },
];

const noteRibbon: RibbonGroup[] = [
  { label: "Close", items: [["close", 52, "Close"]] },
  { label: "Records Creation", items: [["cubes", 111, "Clone...", true]] },
  { label: "Save", items: [["save", 44, "Save"], ["saveClose", 60, "Save and\nClose"]] },
  {
    label: "Edit",
    items: [
      ["abc", 48, "Check\nSpelling"], ["flag", 46, "Flag"], ["letter", 66, "Load Letter\nTemplate", true],
      ["cross", 46, "Delete", true], ["undo", 46, "Cancel"],
    ],
  },
  { label: "Open Related Record", items: [["related", 130, "Open Related\nRecord", true]] },
  { label: "View", items: [["refresh", 52, "Refresh", true], ["audit", 46, "Audit\nLog"]] },
  { label: "Records Navigation", items: [["find", 44, "Find"], ["up", 54, "Previous\nRecord", true], ["down", 74, "Next Record", true]] },
];

const Navigation = () => (
  <NavPanel>
    <NavHeader>
      <NavTitle>Navigation</NavTitle>
      <button aria-label="Pin panel"><Glyph name="thumb" /></button>
      <button aria-label="Close panel"><Glyph name="x" /></button>
    </NavHeader>
    <NavSection>CRM/Sales</NavSection>
    <Tree>
      {tree.map(([icon, text, child, state]) => (
        <TreeRow key={text} $child={!!child}>
          {state && <Glyph name={state} />}
          <Icon name={icon} />
          <TreeLink href="#" $on={text === "Opportunity List"}>{text}</TreeLink>
        </TreeRow>
      ))}
    </Tree>
    <Splitter>{[0, 1, 2, 3, 4, 5].map((i) => <Dot key={i} />)}</Splitter>
    {modules.map(([icon, text]) => (
      <NavLink key={text} href="#" $on={text === "CRM/Sales"}><Icon name={icon} />{text}</NavLink>
    ))}
    <NavFooter>
      {["calc", "clip", "db", "swap", "orb"].map((n) => <QuickButton key={n} aria-label={n}><Icon name={n} /></QuickButton>)}
      <QuickButton aria-label="More modules"><Glyph name="chevron" /></QuickButton>
    </NavFooter>
  </NavPanel>
);

const Main = () => (
  <MainWindow>
    <Chrome
      dim
      title="13: Kinlex Pharma-Tech - Opportunity - EventPro"
      tabs={["Home", "View", "Tools"]}
      quick={[["logo"], ["up"], ["down"], ["refresh"], ["task"], ["find"], ["clip"], ["save", true], ["saveClose", true], ["undo", true]]}
    />
    <Ribbon groups={mainRibbon} />
    <Workspace>
      <Navigation />
      <Document>
        <DocumentTabs>
          <DocumentTab />
          <TabList aria-label="Open documents"><Glyph name="caret" size={14} /></TabList>
        </DocumentTabs>
        <DocumentFrame>
          <DocumentPage>
            <RecordBox>
              <FieldBox $h={20} $bg="#f0f0f0"><FieldInput $right aria-label="Record number" defaultValue="13" /></FieldBox>
              <Select label="Status" value="" />
              <Lookup label="Account" />
              <Lookup label="Company" bg="#f0f0f0" edit={false} />
              <Lookup label="Contact" bg="#f0f0f0" edit={false} />
              <Lookup label="Salesperson" />
              <FieldBox $h={20}><FieldInput aria-label="Description" /></FieldBox>
              <Lookup label="Priority" bg="#ffd500" />
              <Lookup label="Source" />
              <Lookup label="Stage" bg="#ffff00" />
              <Lookup label="Type" />
              <Lookup label="Territory" />
              <Select label="Date" value="" />
              <Lookup label="Rating" bg="#d8bfd8" />
            </RecordBox>
            <RecordNotes>
              <ScrollBar>
                <ScrollButton $dim aria-label="Scroll up"><Glyph name="chevronUp" /></ScrollButton>
                <ScrollButton $dim aria-label="Scroll down"><Glyph name="chevron" /></ScrollButton>
              </ScrollBar>
            </RecordNotes>
          </DocumentPage>
        </DocumentFrame>
      </Document>
    </Workspace>
    <StatusBar>
      <span>User: AliceK_001000</span>
      <span>Client ID: PSI001000AK2</span>
      <span>Memory Usage: 202MB</span>
      <span>Version: 18.0.10</span>
      <Grip width="10" height="10" viewBox="0 0 10 10" aria-hidden="true">
        <path d="M7 1h2v2H7zM4 4h2v2H4zM7 4h2v2H7zM1 7h2v2H1zM4 7h2v2H4zM7 7h2v2H7z" fill="#a9cfee" />
      </Grip>
    </StatusBar>
  </MainWindow>
);

/* ---------- note window ---------- */

const NoteWindow = styled.section`
  position: absolute;
  top: 90px;
  left: 198px;
  right: 270px;
  background: #fff;
  border: 1px solid ${BLUE};
  box-shadow: 0 0 5px rgba(0, 0, 0, 0.3);
`;
const NoteBody = styled.div`
  padding: 14px 10px 9px;
`;
const Columns = styled.div`
  display: flex;
  margin-bottom: 13px;
`;
const VerticalSplitter = styled.div`
  display: flex;
  flex: none;
  flex-direction: column;
  align-items: center;
  justify-content: center;
  gap: 2px;
  width: 22px;
  color: #777;
`;
const MenuAnchor = styled.div`
  position: relative;
`;
const Menu = styled.ul`
  position: absolute;
  z-index: 1;
  top: 27px;
  left: 81px;
  width: 129px;
  margin: 0;
  padding: 1px;
  list-style: none;
  background: #fff;
  border: 1px solid #ababab;
  box-shadow: 2px 2px 3px rgba(0, 0, 0, 0.25);
`;
const MenuItem = styled.button<{ $on?: boolean }>`
  justify-content: flex-start;
  width: 100%;
  height: 24px;
  padding-left: 32px;
  font-size: 12px;
  border: 1px solid ${(p) => (p.$on ? "#7db7ea" : "transparent")};
  background: ${(p) => (p.$on ? "#cde6f7" : "linear-gradient(90deg, transparent 26px, #dcdcdc 26px, #dcdcdc 27px, transparent 27px)")};
`;
const SubjectRow = styled(Row)`
  padding: 13px 0 6px;
`;
const PlainInput = styled.input`
  height: 20px;
  padding: 0 3px;
  border: 1px solid #ababab;
`;
const Result = styled(EditorFrame)`
  position: absolute;
  top: 571px;
  left: 508px;
  right: 25px;
  box-shadow: 0 1px 28px 2px rgba(0, 0, 0, 0.55);
`;
const Pointer = styled.svg`
  position: absolute;
  top: 408px;
  left: 338px;
`;

const NoteDialog = () => (
  <NoteWindow aria-label="Note">
    <Chrome
      title="Phone Call with Adrienne - Note"
      tabs={["Home"]}
      quick={[["note"], ["up", true], ["down", true], ["refresh", true], ["find"], ["save"], ["saveClose"], ["undo"]]}
    />
    <Ribbon groups={noteRibbon} />
    <NoteBody>
      <Columns>
        <GroupBox $grow={494}>
          <Legend>Communication</Legend>
          <Rows>
            <Row $label={82}><label htmlFor="event">Event:</label><Lookup id="event" /></Row>
            <Row $label={82}><label htmlFor="opp">Opportunity:</label><Lookup id="opp" value="13: Kinlex Pharma-Tech" /></Row>
            <Row $label={82}><label htmlFor="linked">Linked To Type:</label><Select id="linked" value="Account" /></Row>
            <Row $label={82}><label htmlFor="account">Account:</label><Lookup id="account" /></Row>
          </Rows>
        </GroupBox>
        <VerticalSplitter>{[0, 1, 2, 3].map((i) => <Dot key={i} />)}</VerticalSplitter>
        <GroupBox $grow={545}>
          <Legend>Details</Legend>
          <Rows>
            <Row $label={60}><label htmlFor="method">Method:</label><Lookup id="method" /></Row>
            <Row $label={60}><label htmlFor="reference">Reference:</label><Lookup id="reference" /></Row>
            <Row $label={60}><label htmlFor="when">Date/Time:</label><Select id="when" value="Tue May 29 2018 @ 3:55 PM" /></Row>
          </Rows>
        </GroupBox>
      </Columns>
      <GroupBox>
        <Legend><Icon name="noteTilt" />Note</Legend>
        <SubjectRow $label={46}><label htmlFor="subject">Subject:</label><PlainInput id="subject" defaultValue="Phone Call with Adrienne" /></SubjectRow>
        <ContentBox>
          <Legend>Content</Legend>
          <MenuAnchor>
            <NoteEditor>
              <EditorToolbar menuOpen />
              <EditorBody $h={170}>
                <Doc role="textbox" aria-label="Note content"><NoteText /></Doc>
                <ScrollBar>
                  <ScrollButton $dim aria-label="Scroll up"><Glyph name="chevronUp" /></ScrollButton>
                </ScrollBar>
              </EditorBody>
            </NoteEditor>
            <Menu>
              <li><MenuItem>Alicia-Gmail</MenuItem></li>
              <li><MenuItem $on>AXG Email</MenuItem></li>
            </Menu>
          </MenuAnchor>
        </ContentBox>
      </GroupBox>
    </NoteBody>
    <StatusBar><span>User: AliceK_001000</span></StatusBar>
  </NoteWindow>
);

export default function App() {
  return (
    <Desktop>
      <Global />
      <Gradients />
      <Main />
      <NoteDialog />
      <Pointer width="96" height="78" viewBox="338 408 96 78" aria-hidden="true">
        <path d="M430 412L360 467" stroke="#fb0a04" strokeWidth="4" />
        <path d="M341 482l16-26 13 16z" fill="#fb0a04" />
      </Pointer>
      <Result aria-label="Note with signature">
        <EditorToolbar />
        <EditorBody $h={170}>
          <Doc role="textbox" aria-label="Signed note content">
            <NoteText />
            <Line />
            <Signature>Alicia X. <Misspelt>Griffon</Misspelt></Signature>
            <SignatureLine>Event Manager</SignatureLine>
            <SignatureLine>EP Venue Events</SignatureLine>
            <Caret />
          </Doc>
          <ScrollBar>
            <ScrollButton aria-label="Scroll up"><Glyph name="chevronUp" /></ScrollButton>
            <ThumbArea><Thumb /></ThumbArea>
            <ScrollButton aria-label="Scroll down"><Glyph name="chevron" /></ScrollButton>
          </ScrollBar>
        </EditorBody>
      </Result>
    </Desktop>
  );
}
